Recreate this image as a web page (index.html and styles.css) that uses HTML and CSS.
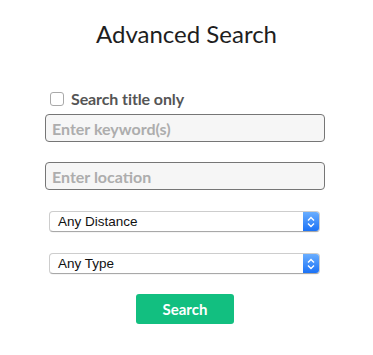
FILE: index.html
```html
<!DOCTYPE html>
<html>
<head>
<meta charset="utf-8">
<link rel="stylesheet" href="styles.css">
</head>
<body>
<div class="page">
  <h1 class="title">Advanced Search</h1>
  <form class="form">
    <label class="check-row">
      <input type="checkbox" class="check">
      <span class="check-label">Search title only</span>
    </label>
    <input class="field field-first" type="text" placeholder="Enter keyword(s)">
    <input class="field field-second" type="text" placeholder="Enter location">
    <div class="select select-first">
      <span class="select-text">Any Distance</span>
      <span class="select-arrows">
        <svg width="8" height="12" viewBox="0 0 8 12"><path d="M1 4.5 L4 1.5 L7 4.5 M1 7.5 L4 10.5 L7 7.5" fill="none" stroke="#fff" stroke-width="1.4"/></svg>
      </span>
    </div>
    <div class="select select-second">
      <span class="select-text">Any Type</span>
      <span class="select-arrows">
        <svg width="8" height="12" viewBox="0 0 8 12"><path d="M1 4.5 L4 1.5 L7 4.5 M1 7.5 L4 10.5 L7 7.5" fill="none" stroke="#fff" stroke-width="1.4"/></svg>
      </span>
    </div>
    <div class="actions">
      <button type="button" class="btn">Search</button>
    </div>
  </form>
</div>
</body>
</html>
```

FILE: styles.css
```css
* { box-sizing: border-box; }
html, body { margin: 0; padding: 0; background: #fff; }
body { font-family: Lato, "Open Sans", sans-serif; width: 373px; height: 355px; overflow: hidden; }

.page { padding-top: 19px; }

.title {
  margin: 0;
  font-size: 24px;
  font-weight: 400;
  line-height: 30px;
  color: #1e1e1e;
  text-align: center;
}

.form {
  display: flex;
  flex-direction: column;
  padding-left: 45px;
  width: 325px;
  margin-top: 40px;
}

.check-row {
  display: flex;
  align-items: center;
  gap: 7px;
  padding-left: 5px;
  height: 19px;
  margin-bottom: 6px;
}

.check {
  appearance: none;
  -webkit-appearance: none;
  margin: 0;
  width: 14px;
  height: 14px;
  border: 1px solid #a9a9a9;
  border-radius: 3px;
  background: #fff;
}

.check-label {
  font-size: 16px;
  font-weight: 700;
  color: #555;
  line-height: 19px;
  letter-spacing: -0.1px;
}

.field {
  width: 280px;
  height: 28px;
  border: 1px solid #767676;
  border-radius: 4px;
  background: #f6f6f6;
  padding: 0 0 0 6px;
  font-family: Lato, sans-serif;
  font-size: 16px;
  font-weight: 700;
  color: #333;
  outline: none;
}
.field::placeholder { color: #adadad; }

.field-second { margin-top: 20px; }

.select {
  display: flex;
  align-items: stretch;
  width: 271px;
  height: 21px;
  margin-left: 4px;
  border: 1px solid #cdcdcd;
  border-bottom-color: #a8a8a8;
  border-radius: 4px;
  background: #fff;
  overflow: hidden;
  box-shadow: 0 0.5px 0.5px rgba(0,0,0,0.08);
}
.select-first { margin-top: 21px; }
.select-second { margin-top: 21px; }

.select-text {
  flex: 1;
  font-family: "Liberation Sans", Arial, sans-serif;
  font-size: 13.5px;
  line-height: 19px;
  color: #111;
  padding-left: 8px;
}

.select-arrows {
  width: 16px;
  display: flex;
  align-items: center;
  justify-content: center;
  background: linear-gradient(#6aaeff, #1b72f6);
}

.actions {
  display: flex;
  justify-content: center;
  width: 280px;
  margin-top: 20px;
}

.btn {
  width: 98px;
  height: 30px;
  border: none;
  border-radius: 3px;
  background: #12bf80;
  color: #fff;
  font-family: Lato, sans-serif;
  font-size: 15px;
  font-weight: 700;
  padding: 0;
}
```
